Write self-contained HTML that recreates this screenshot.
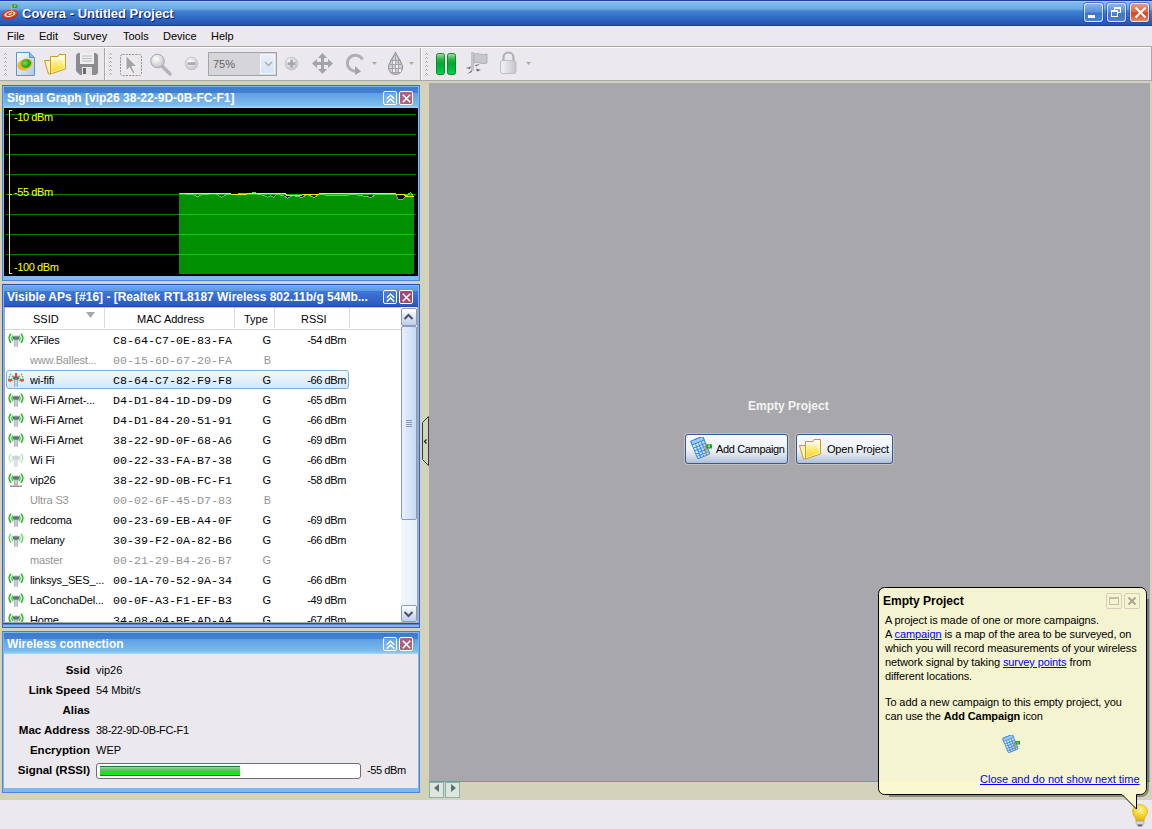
<!DOCTYPE html>
<html><head><meta charset="utf-8">
<style>
*{box-sizing:border-box}
html,body{margin:0;padding:0}
body{width:1152px;height:829px;overflow:hidden;position:relative;background:#D3D2BA;font-family:"Liberation Sans",sans-serif;font-size:11px;color:#000}
.a{position:absolute}
.t{position:absolute;white-space:nowrap;line-height:13px}
/* title bar */
#title{left:0;top:0;width:1152px;height:26px;background:linear-gradient(#1F3FA5 0,#1F3FA5 1px,#9ACBF3 1px,#9ACBF3 2px,#80BDEE 2px,#6CAAE6 8.5px,#5C98DE 10px,#3E82D2 11px,#2E62BE 20px,#2A52B2 25px,#1C3A9C 25px)}
#title .tt{left:22px;top:6px;font-weight:bold;font-size:13px;color:#fff;text-shadow:1px 1px 0 #0A1E70;line-height:16px}
.wb{position:absolute;top:3px;width:19px;height:19px;border:1px solid rgba(255,255,255,.75);border-radius:3px;box-shadow:0 0 0 1px rgba(30,60,160,.55);background:linear-gradient(#88B4EC,#5C90DC 45%,#3E74CC 55%,#4C80D2)}
.wbc{background:linear-gradient(#E49A80,#DA6A44 45%,#D0461A 55%,#E48A68)}
/* menu */
#menu{left:0;top:26px;width:1152px;height:20px;background:#EBE9ED}
#menu .t{top:4px}
/* toolbar */
#tool{left:0;top:46px;width:1152px;height:35px;background:#EBE9ED;border-top:1px solid #A8A8A8;border-bottom:1px solid #A8A8A8;border-right:1px solid #A8A8A8}
#tool:before{content:"";position:absolute;left:0;top:0;right:0;height:1px;background:#fff}
.sep{position:absolute;top:1px;width:2px;height:32px;border-left:1px solid #A8A8A8;border-right:1px solid #fff}
.grip{position:absolute;top:7px;width:3px;height:22px;background:radial-gradient(circle at 1.5px 1.5px,#9A9A9A 0.8px,transparent 1.2px);background-size:3px 4px}
/* panels */
.hdrI{background:linear-gradient(#3E7ACC,#4282D2 6px,#5E9EE6 6px,#7CBCEA 18px,#92CEF6 20px,#9AD4F8 20px)}
.hdrA{background:linear-gradient(#6AA8EC,#5C98E4 5px,#3C78D8 5px,#2C58C0 20px,#2448B0 20px)}
.ht{position:absolute;left:5px;top:5px;font-weight:bold;font-size:12px;color:#fff;white-space:nowrap;line-height:14px}
.pb{position:absolute;top:5px;width:14px;height:14px;border:1px solid #fff;border-radius:2px}
.pb1{left:381px}
.pb2{left:397px}
.pbx{background:#B0607E}
.pbxA{background:#A04A72}
/* list */
.row{position:absolute;left:0;width:395px;height:20px}
.row .t{top:4px}
.mac{font-family:"Liberation Mono",monospace;font-size:11.67px;letter-spacing:0px;top:5px !important}
.dis{color:#939393}

.lv{position:absolute;left:5px;top:330px;width:396px;height:292px;overflow:hidden}
.selbox{left:1px;top:0;width:343px;height:19px;border:1px solid #7DB2DA;border-radius:3px;background:linear-gradient(#F2F8FD,#D4E8F8)}
.hd{position:absolute;top:0;height:22px}
.colsep{position:absolute;top:2px;width:1px;height:20px;background:#DCDCDC}
.lbl{position:absolute;right:0;font-weight:bold;font-size:11.5px;white-space:nowrap;line-height:13px}
.wc .t{left:96px}
.xpbtn{position:absolute;top:434px;height:30px;border:1px solid #2F5A94;border-radius:3px;box-shadow:0 0 0 1px rgba(235,225,215,.45);background:linear-gradient(#FFFFFF 0,#F4F8FA 10%,#EDF2F5 52%,#D4DDE9 76%,#AEBED8 100%)}
.balloon{position:absolute;left:878px;top:587px;width:270px;height:208px;border:1px solid #1A1A1A;border-radius:7px;background:rgba(255,255,226,0.9)}
.lnk{color:#0000FF;text-decoration:underline}
.sb{position:absolute;background:linear-gradient(90deg,#E8F0FC,#C8DAF2);border:1px solid #8C9CB8;border-radius:2px}
</style></head><body>

<svg width="0" height="0" style="position:absolute">
<defs>
  <linearGradient id="gmast" x1="0" x2="1"><stop offset="0" stop-color="#8C90A4"/><stop offset=".5" stop-color="#E4E6EE"/><stop offset="1" stop-color="#8A8EA2"/></linearGradient>
  <linearGradient id="ghead" x1="0" y1="0" x2="0" y2="1"><stop offset="0" stop-color="#B8BCC8"/><stop offset=".5" stop-color="#5C6274"/><stop offset="1" stop-color="#8C90A0"/></linearGradient>
  <g id="antbase">
    <rect x="6.2" y="6" width="3.6" height="8" rx="1" fill="url(#gmast)"/>
    <rect x="5" y="2.5" width="6" height="4.5" rx="1.5" fill="url(#ghead)"/>
  </g>
  <g id="antn">
    <path d="M3 .8Q-.6 5.2 3 9.8M13 .8Q16.6 5.2 13 9.8" fill="none" stroke="#2EBB2E" stroke-width="1.6"/>
    <path d="M5 2.6Q2.8 5.3 5 8.2M11 2.6Q13.2 5.3 11 8.2" fill="none" stroke="#3ACC3A" stroke-width="1.4"/>
    <use href="#antbase"/>
  </g>
  <g id="antm">
    <path d="M3 .8Q-.6 5.2 3 9.8M13 .8Q16.6 5.2 13 9.8" fill="none" stroke="#6CD46C" stroke-width="1.5"/>
    <path d="M5 2.6Q2.8 5.3 5 8.2M11 2.6Q13.2 5.3 11 8.2" fill="none" stroke="#78DA78" stroke-width="1.3"/>
    <use href="#antbase"/>
  </g>
  <g id="antp">
    <path d="M3 .8Q-.6 5.2 3 9.8M13 .8Q16.6 5.2 13 9.8" fill="none" stroke="#BDE8BD" stroke-width="1.5"/>
    <path d="M5 2.6Q2.8 5.3 5 8.2M11 2.6Q13.2 5.3 11 8.2" fill="none" stroke="#C4ECC4" stroke-width="1.3"/>
    <rect x="6.2" y="6" width="3.6" height="8" rx="1" fill="#DDDEE4"/>
    <rect x="5" y="2.5" width="6" height="4.5" rx="1.5" fill="#D0D2DA"/>
  </g>
  <g id="antv">
    <use href="#antn"/>
    <path d="M5.5 12.5L8 10L10.5 12.5Z" fill="#F4B040"/>
    <rect x="2" y="12.5" width="12" height="1.5" fill="#9098B0"/>
  </g>
  <g id="ants">
    <path d="M3 .8Q-.6 5.2 3 9.8M13 .8Q16.6 5.2 13 9.8" fill="none" stroke="#3CC83C" stroke-width="1.3" stroke-dasharray="1.5 1"/>
    <path d="M5 2.6Q2.8 5.3 5 8.2M11 2.6Q13.2 5.3 11 8.2" fill="none" stroke="#40CC40" stroke-width="1.2" stroke-dasharray="1.5 1"/>
    <use href="#antbase"/>
    <rect x="7" y="0" width="2.2" height="4" fill="#F04848"/>
    <rect x="0" y="6" width="4" height="2.2" fill="#F04848"/>
    <rect x="12" y="6" width="4" height="2.2" fill="#F04848"/>
  </g>
  <linearGradient id="gcal" x1="0" y1="0" x2="1" y2="1"><stop offset="0" stop-color="#F4FAFF"/><stop offset="1" stop-color="#A8D2F8"/></linearGradient>
  <g id="camp">
    <g transform="rotate(-22 10.25 10.6)">
      <rect x="3.75" y="1.1" width="13" height="19" rx="1" fill="url(#gcal)" stroke="#3D86DC" stroke-width="1"/>
      <rect x="3.75" y="1.1" width="13" height="4" rx="1" fill="#9ACCF8" stroke="#3D86DC" stroke-width="1"/>
      <path d="M4 8.5H16.5M4 11.5H16.5M4 14.5H16.5M4 17.5H16.5M7 6V20M10.2 6V20M13.4 6V20" stroke="#3D86DC" stroke-width="1"/>
    </g>
    <rect x="15.2" y="7.3" width="1.3" height="10" fill="#C8902A"/>
    <path d="M16.5 7.3H22V11.5H16.5Z" fill="#1FA01F"/>
    <rect x="18" y="8.3" width="2" height="2" fill="#80E880"/>
  </g>
  <g id="camp2">
    <g transform="scale(.82)"><use href="#camp"/></g>
  </g>
  <linearGradient id="gfold" x1="0" y1="0" x2="0" y2="1"><stop offset="0" stop-color="#FFFDE8"/><stop offset="1" stop-color="#FFF0A0"/></linearGradient>
  <linearGradient id="gfold2" x1="0" y1="0" x2="0" y2="1"><stop offset="0" stop-color="#FFF4B0"/><stop offset="1" stop-color="#FFD81C"/></linearGradient>
  <g id="folder">
    <path d="M0.5 7.5H6.5V21L4.5 21Z" fill="#FFF6B8" stroke="#CF9A22" stroke-width="1" stroke-linejoin="round"/>
    <path d="M6.5 3.5H14L15 1.5H21.5V16L6.5 21Z" fill="url(#gfold)" stroke="#CF9A22" stroke-width="1" stroke-linejoin="round"/>
    <path d="M7.5 6.5H17L20.5 15L7.5 19Z" fill="url(#gfold2)"/>
  </g>
</defs>
</svg>

<!-- TITLE BAR -->
<div id="title" class="a">
  <svg class="a" style="left:1px;top:2px" width="19" height="19">
    <g transform="rotate(-12 9 12.4)">
    <ellipse cx="9" cy="12.6" rx="8.2" ry="4.6" fill="#C82810"/>
    <ellipse cx="9" cy="12.2" rx="7.6" ry="4" fill="#E84020"/>
    <ellipse cx="9" cy="12" rx="5.6" ry="2.8" fill="#FCE8E0"/>
    <ellipse cx="9" cy="12" rx="3.8" ry="1.8" fill="#E83A1A"/>
    <ellipse cx="9" cy="12" rx="1.6" ry=".8" fill="#FFF0E8"/>
    </g>
    <rect x="10" y="2" width="1.3" height="10" fill="#D8B040"/>
    <path d="M11.3 2 L16.5 2.8 L16.5 6.2 L11.3 5.8Z" fill="#2CAA2C"/>
    <rect x="13" y="3" width="1.5" height="1.5" fill="#90F090"/>
  </svg>
  <div class="t tt">Covera - Untitled Project</div>
  <div class="wb" style="left:1084px"><div class="a" style="left:3px;top:11px;width:7px;height:3px;background:#fff"></div></div>
  <div class="wb" style="left:1107px">
    <div class="a" style="left:6px;top:3px;width:7px;height:6px;border:1px solid #fff;border-top-width:2px"></div>
    <div class="a" style="left:3px;top:6px;width:7px;height:7px;border:1px solid #fff;border-top-width:2px;background:#4E84D4"></div>
  </div>
  <div class="wb wbc" style="left:1130px">
    <svg class="a" style="left:3px;top:2px" width="13" height="13"><path d="M1.5 1.5L11.5 11.5M11.5 1.5L1.5 11.5" stroke="#fff" stroke-width="2"/></svg>
  </div>
</div>

<!-- MENU -->
<div id="menu" class="a">
  <div class="t" style="left:7px">File</div>
  <div class="t" style="left:39px">Edit</div>
  <div class="t" style="left:73px">Survey</div>
  <div class="t" style="left:123px">Tools</div>
  <div class="t" style="left:163px">Device</div>
  <div class="t" style="left:211px">Help</div>
</div>

<!-- TOOLBAR -->
<div id="tool" class="a">
  <div class="sep" style="left:104px"></div>
  <div class="sep" style="left:420px"></div>
</div>


<!-- toolbar icons (global coords) -->
<svg class="a" style="left:0;top:47px" width="540" height="33">
  <defs>
    <linearGradient id="gdoc" x1="0" y1="0" x2="1" y2="1"><stop offset="0" stop-color="#FFFFFF"/><stop offset="1" stop-color="#A8C8E4"/></linearGradient>
    <radialGradient id="gblob" cx=".4" cy=".4" r=".6"><stop offset="0" stop-color="#70E050"/><stop offset="1" stop-color="#129A12"/></radialGradient>
    <linearGradient id="gpause" x1="0" y1="0" x2="0" y2="1"><stop offset="0" stop-color="#A8DCB0"/><stop offset=".3" stop-color="#22B040"/><stop offset=".5" stop-color="#00A838"/><stop offset="1" stop-color="#00D050"/></linearGradient>
    <linearGradient id="glock" x1="0" y1="0" x2="1" y2="0"><stop offset="0" stop-color="#F4F4F8"/><stop offset=".6" stop-color="#DADADE"/><stop offset="1" stop-color="#C4C4C8"/></linearGradient>
    <radialGradient id="gmag" cx=".4" cy=".35" r=".6"><stop offset="0" stop-color="#FFFFFF"/><stop offset="1" stop-color="#C8C8CC"/></radialGradient>
    <g id="grip"><path d="M0.5 2.5L1.5 1.5L2.5 2.5" fill="none" stroke="#808080" stroke-width="1"/><path d="M0.5 3.5L1.5 2.5L2.5 3.5" fill="none" stroke="#FFFFFF" stroke-width="1" opacity=".9"/></g>
  </defs>
  <!-- grippers -->
  <g transform="translate(4 5)"><use href="#grip"/><use href="#grip" y="4"/><use href="#grip" y="8"/><use href="#grip" y="12"/><use href="#grip" y="16"/><use href="#grip" y="20"/></g>
  <g transform="translate(109 5)"><use href="#grip"/><use href="#grip" y="4"/><use href="#grip" y="8"/><use href="#grip" y="12"/><use href="#grip" y="16"/><use href="#grip" y="20"/></g>
  <g transform="translate(425 5)"><use href="#grip"/><use href="#grip" y="4"/><use href="#grip" y="8"/><use href="#grip" y="12"/><use href="#grip" y="16"/><use href="#grip" y="20"/></g>
  <!-- new doc 16..34 x 52..75 -->
  <g transform="translate(0 -47)">
    <path d="M16.5 52.5H29.5L34.5 57.5V75.5H16.5Z" fill="url(#gdoc)" stroke="#5C94D4" stroke-width="1"/>
    <path d="M29.5 52.5V57.5H34.5" fill="#8CB8E8" stroke="#5C94D4" stroke-width="1"/>
    <ellipse cx="25" cy="64.5" rx="7.8" ry="5.6" transform="rotate(-20 25 64.5)" fill="#F4B420"/>
    <ellipse cx="26" cy="63.5" rx="5" ry="4.2" transform="rotate(-20 26 63.5)" fill="url(#gblob)"/>
  </g>
  <!-- folder 44..66 x 54..74 -->
  <g transform="translate(44 6)"><use href="#folder"/></g>
  <!-- save 76..98 x 53..75 -->
  <g transform="translate(0 -47)">
    <path d="M78 53H96L98 55V73L96 75H80L76 71V55Z" fill="#8C8C8E"/>
    <rect x="80" y="53" width="14" height="11" fill="#F0F0F2"/>
    <path d="M82 56H92M82 58.5H92M82 61H92" stroke="#B8B8BC" stroke-width="1"/>
    <rect x="82" y="67" width="10" height="8" fill="#E4E4E6"/>
    <rect x="83" y="68" width="3" height="6" fill="#6C6C70"/>
  </g>
  <!-- select 120..142 x 54..75 -->
  <g transform="translate(0 -47)">
    <rect x="120.5" y="54.5" width="21" height="21" rx="2" fill="none" stroke="#8E8E8E" stroke-width="1" stroke-dasharray="2 1.2"/>
    <path d="M126 55.5V71L129.5 67.5L133 74L135 73L132 66.5H137Z" fill="#A4A4A6" stroke="#FFFFFF" stroke-width=".8"/>
  </g>
  <!-- magnifier -->
  <g transform="translate(0 -47)">
    <path d="M162 66L170 74" stroke="#B4B4B8" stroke-width="3.6" stroke-linecap="round"/>
    <circle cx="157.5" cy="61" r="6.8" fill="url(#gmag)" stroke="#A8A8AC" stroke-width="1"/>
  </g>
  <!-- minus -->
  <g transform="translate(0 -47)">
    <circle cx="191.5" cy="63.5" r="6.3" fill="url(#gmag)" stroke="#C4C4C8" stroke-width="1"/>
    <rect x="187.5" y="62.3" width="8" height="2.6" fill="#A8A8AC"/>
  </g>
  <!-- plus -->
  <g transform="translate(0 -47)">
    <circle cx="291.5" cy="63.5" r="6.3" fill="url(#gmag)" stroke="#C4C4C8" stroke-width="1"/>
    <path d="M287.5 63.6H295.5M291.5 59.6V67.6" stroke="#A8A8AC" stroke-width="2.6"/>
  </g>
  <!-- move 312..333 x 53..74 -->
  <g transform="translate(0 -47)" fill="#A4A4A8">
    <rect x="321" y="57" width="3" height="13"/>
    <rect x="316" y="62" width="13" height="3"/>
    <path d="M322.5 53L327 58H318Z M322.5 74L327 69H318Z M312 63.5L317 59V68Z M333 63.5L328 59V68Z"/>
  </g>
  <!-- rotate -->
  <g transform="translate(0 -47)">
    <path d="M362.5 59.5A8 8 0 1 0 357 71" fill="none" stroke="#B0B0B4" stroke-width="3"/>
    <path d="M355 66L361 71.5L355 75Z" fill="#A4A4A8"/>
    <path d="M372 62H377L374.5 65Z" fill="#AEAE98"/>
  </g>
  <!-- drop 388..403 x 52..75 -->
  <g transform="translate(0 -47)">
    <path d="M395.5 52.5C393 58 388.5 63 388.5 67.5A7 7 0 0 0 402.5 67.5C402.5 63 398 58 395.5 52.5Z" fill="#D2D2D6" stroke="#96969A" stroke-width="1.1"/>
    <path d="M390 60.5H401M389 64.5H402M389 68.5H402M390 72.5H401M392.5 57V74M395.5 55V75M398.5 57V74" stroke="#A4A4A8" stroke-width="1"/>
    <path d="M393 61h2v3h-2zM396 65h2v3h-2zM393 69h2v3h-2zM399 69h2v3h-2z" fill="#F4F4F6"/>
    <path d="M409 62H414L411.5 65Z" fill="#AEAE98"/>
  </g>
  <!-- pause -->
  <g transform="translate(0 -47)">
    <rect x="436.5" y="53.5" width="8" height="21" rx="2" fill="url(#gpause)" stroke="#118A22" stroke-width="1"/>
    <rect x="447.5" y="53.5" width="8" height="21" rx="2" fill="url(#gpause)" stroke="#118A22" stroke-width="1"/>
  </g>
  <!-- flag 466..487 x 52..75 -->
  <g transform="translate(0 -47)">
    <rect x="471" y="52" width="3" height="19" fill="#C4C4C8"/>
    <path d="M474 54C478 52 480 56 487 54V63C481 65 478 61 474 63Z" fill="#C8C8CC" stroke="#A8A8AC" stroke-width=".8"/>
    <path d="M466 68L471 66.5L470 69Z M481 70L476 68.5L477 71.5Z M467 74L471.5 70.5L472 72Z M480 64L476 66.5L475 65Z" fill="#6C6C70"/>
  </g>
  <!-- lock -->
  <g transform="translate(0 -47)">
    <path d="M503.5 62V57.5A5 5 0 0 1 513.5 57.5V62" fill="none" stroke="#B0B0B4" stroke-width="2.2"/>
    <rect x="500.5" y="60.5" width="15.5" height="13" rx="2.5" fill="url(#glock)" stroke="#BEBEC2" stroke-width="1"/>
    <path d="M526 62H531L528.5 65Z" fill="#AEAE98"/>
  </g>
</svg>
<!-- combo -->
<div class="a" style="left:208px;top:52px;width:69px;height:24px;border:1px solid #A4A4A6;background:#D6D5DA">
  <div class="t" style="left:4px;top:5px;color:#646464">75%</div>
  <div class="a" style="left:51px;top:1px;width:15px;height:20px;background:linear-gradient(#E6F0FC,#D4E4F8);border:1px solid #F4F8FF"><svg class="a" style="left:3px;top:6px" width="9" height="6"><path d="M1 1L4.5 4.5L8 1" fill="none" stroke="#B4B4A0" stroke-width="1.6"/></svg></div>
</div>

<!-- RIGHT GRAY AREA -->
<div class="a" style="left:429px;top:83px;width:721px;height:698px;background:#A8A7AC"></div>
<div class="a" style="left:429px;top:781px;width:721px;height:1px;background:#6F9C9C"></div>

<!-- STATUS BAR -->
<div class="a" style="left:0;top:800px;width:1152px;height:29px;background:#EBE9ED"></div>

<!-- PANEL 1 -->
<div class="a" style="left:2px;top:85px;width:418px;height:196px;background:#82BCEE;border:1px solid #4C84DC;border-top-color:#3E62C4;border-right-color:#4A7CD8"></div>
<div class="a hdrI" style="left:4px;top:87px;width:414px;height:21px">
  <div class="ht" style="left:3px;top:4px">Signal Graph [vip26 38-22-9D-0B-FC-F1]</div>
</div>
<div class="a" style="left:4px;top:108px;width:414px;height:168px;background:#000"></div>

<!-- PANEL 2 -->
<div class="a" style="left:2px;top:284px;width:418px;height:344px;background:#84B6EC;border:1px solid #3A62C8;border-top-color:#2A4CB0"></div>
<div class="a hdrA" style="left:4px;top:286px;width:414px;height:21px">
  <div class="ht" style="left:3px;top:4px">Visible APs [#16] - [Realtek RTL8187 Wireless 802.11b/g 54Mb...</div>
</div>
<div class="a" style="left:4px;top:307px;width:414px;height:316px;background:#fff;border:1px solid #A4A4A4;border-top:0;border-bottom-color:#B0AAA4"></div>
<div class="a" style="left:3px;top:623px;width:416px;height:1px;background:#2A4CA8"></div>
<div class="a" style="left:3px;top:624px;width:416px;height:1px;background:#5A88D0"></div>

<!-- PANEL 3 -->
<div class="a" style="left:2px;top:631px;width:418px;height:162px;background:#7EB8EE;border:1px solid #4C84DC;border-top-color:#4A78D8"></div>
<div class="a hdrI" style="left:4px;top:633px;width:414px;height:21px">
  <div class="ht" style="left:3px;top:4px">Wireless connection</div>
</div>
<div class="a" style="left:4px;top:654px;width:414px;height:134px;background:#EBE9ED"></div>

<svg class="a" style="left:4px;top:108px" width="414" height="168" shape-rendering="crispEdges">
  <rect x="2" y="6" width="410" height="1" fill="#008000"/><rect x="2" y="26" width="410" height="1" fill="#008000"/><rect x="2" y="46" width="410" height="1" fill="#008000"/><rect x="2" y="66" width="410" height="1" fill="#008000"/><rect x="2" y="86" width="410" height="1" fill="#008000"/><rect x="2" y="106" width="410" height="1" fill="#008000"/><rect x="2" y="126" width="410" height="1" fill="#008000"/><rect x="2" y="146" width="410" height="1" fill="#008000"/>
  <polygon points="175,166 175.5,85.5 188.5,86.5 193.5,88.5 198.5,86.5 211.5,85.5 217.5,89.5 222.5,86.5 246.5,85.5 250.5,84.5 254.5,86.5 260.5,87.5 263.5,89.5 266.5,87.5 269.5,89.5 272.5,86.5 279.5,87.5 283.5,90.5 288.5,87.5 298.5,89.5 302.5,86.5 310.5,89.5 314.5,86.5 326.5,87.5 341.5,87.5 348.5,86.5 356.5,87.5 367.5,89.5 371.5,86.5 391.5,86.5 394.5,91.5 398.5,91.5 401.5,88.5 406.5,84.5 409.5,88.5 410,88 410,166" fill="#009000"/>
  <rect x="175" y="86" width="234" height="1" fill="#18C018"/><rect x="175" y="106" width="234" height="1" fill="#18C018"/><rect x="175" y="126" width="234" height="1" fill="#18C018"/><rect x="175" y="146" width="234" height="1" fill="#18C018"/>
  <polyline points="175.5,85.5 188.5,86.5 193.5,88.5 198.5,86.5 211.5,85.5 217.5,89.5 222.5,86.5 246.5,85.5 250.5,84.5 254.5,86.5 260.5,87.5 263.5,89.5 266.5,87.5 269.5,89.5 272.5,86.5 279.5,87.5 283.5,90.5 288.5,87.5 298.5,89.5 302.5,86.5 310.5,89.5 314.5,86.5 326.5,87.5 341.5,87.5 348.5,86.5 356.5,87.5 367.5,89.5 371.5,86.5 391.5,86.5 394.5,91.5 398.5,91.5 401.5,88.5 406.5,84.5 409.5,88.5" fill="none" stroke="#48E048" stroke-width="1"/>
  <polyline points="175.5,85.5 226.5,85.5 227.5,86.5 242.5,86.5 243.5,85.5 281.5,85.5 282.5,87.5 314.5,86.5 315.5,85.5 391.5,85.5 392.5,86.5 400.5,86.5 401.5,88.5 409.5,88.5" fill="none" stroke="#F0F000" stroke-width="1"/>
  <path d="M7.5 2.5H5.5V165.5H7.5M5.5 86.5H7.5" fill="none" stroke="#FFFF00" stroke-width="1"/>
</svg>
<div class="t" style="left:14px;top:111px;color:#FFFF00;letter-spacing:-0.4px">-10 dBm</div>
<div class="t" style="left:14px;top:186px;color:#FFFF00;letter-spacing:-0.4px">-55 dBm</div>
<div class="t" style="left:14px;top:261px;color:#FFFF00;letter-spacing:-0.4px">-100 dBm</div>
<div class="pb" style="left:383px;top:91px;background:rgba(255,255,255,.08)"><svg class="a" style="left:2px;top:2px" width="9" height="9"><path d="M.8 4.8L4.5 1.2L8.2 4.8M.8 8.6L4.5 5L8.2 8.6" fill="none" stroke="#fff" stroke-width="1.5"/></svg></div>
<div class="pb pbx" style="left:399px;top:91px"><svg class="a" style="left:2px;top:2px" width="9" height="9"><path d="M.8 .8L8.2 8.2M8.2 .8L.8 8.2" stroke="#fff" stroke-width="1.6"/></svg></div>

<!-- panel 2 buttons -->
<div class="pb" style="left:383px;top:290px;background:rgba(255,255,255,.08)"><svg class="a" style="left:2px;top:2px" width="9" height="9"><path d="M.8 4.8L4.5 1.2L8.2 4.8M.8 8.6L4.5 5L8.2 8.6" fill="none" stroke="#fff" stroke-width="1.5"/></svg></div>
<div class="pb pbxA" style="left:399px;top:290px"><svg class="a" style="left:2px;top:2px" width="9" height="9"><path d="M.8 .8L8.2 8.2M8.2 .8L.8 8.2" stroke="#fff" stroke-width="1.6"/></svg></div>

<!-- list header -->
<div class="a" style="left:5px;top:307px;width:396px;height:23px;background:#fff;border-bottom:1px solid #D8D8D8"></div>
<div class="a" style="left:5px;top:307px;width:412px;height:1px;background:#C9C5C0"></div>
<div class="t" style="left:33px;top:313px">SSID</div>
<svg class="a" style="left:86px;top:312px" width="10" height="7"><path d="M0 0H9L4.5 6Z" fill="#A8A8A8"/></svg>
<div class="colsep" style="left:104px;top:308px"></div>
<div class="t" style="left:137px;top:313px">MAC Address</div>
<div class="colsep" style="left:234px;top:308px"></div>
<div class="t" style="left:244px;top:313px">Type</div>
<div class="colsep" style="left:274px;top:308px"></div>
<div class="t" style="left:301px;top:313px">RSSI</div>
<div class="colsep" style="left:349px;top:308px"></div>

<div class="lv">
<div class="row" style="top:0px"><svg class="a" style="left:3px;top:3px" width="16" height="14"><use href="#antn"/></svg><div class="t" style="left:25px;letter-spacing:-0.15px">XFiles</div><div class="t mac" style="left:108px">C8-64-C7-0E-83-FA</div><div class="t" style="left:239px;width:27px;text-align:right">G</div><div class="t" style="left:281px;width:60px;text-align:right;letter-spacing:-0.4px">-54 dBm</div></div>
<div class="row dis" style="top:20px"><div class="t" style="left:25px;letter-spacing:-0.15px">www.Ballest...</div><div class="t mac" style="left:108px">00-15-6D-67-20-FA</div><div class="t" style="left:239px;width:27px;text-align:right">B</div><div class="t" style="left:281px;width:60px;text-align:right;letter-spacing:-0.4px"></div></div>
<div class="row" style="top:40px"><div class="a selbox"></div><svg class="a" style="left:3px;top:3px" width="16" height="14"><use href="#ants"/></svg><div class="t" style="left:25px;letter-spacing:-0.15px">wi-fifi</div><div class="t mac" style="left:108px">C8-64-C7-82-F9-F8</div><div class="t" style="left:239px;width:27px;text-align:right">G</div><div class="t" style="left:281px;width:60px;text-align:right;letter-spacing:-0.4px">-66 dBm</div></div>
<div class="row" style="top:60px"><svg class="a" style="left:3px;top:3px" width="16" height="14"><use href="#antn"/></svg><div class="t" style="left:25px;letter-spacing:-0.15px">Wi-Fi Arnet-...</div><div class="t mac" style="left:108px">D4-D1-84-1D-D9-D9</div><div class="t" style="left:239px;width:27px;text-align:right">G</div><div class="t" style="left:281px;width:60px;text-align:right;letter-spacing:-0.4px">-65 dBm</div></div>
<div class="row" style="top:80px"><svg class="a" style="left:3px;top:3px" width="16" height="14"><use href="#antn"/></svg><div class="t" style="left:25px;letter-spacing:-0.15px">Wi-Fi Arnet</div><div class="t mac" style="left:108px">D4-D1-84-20-51-91</div><div class="t" style="left:239px;width:27px;text-align:right">G</div><div class="t" style="left:281px;width:60px;text-align:right;letter-spacing:-0.4px">-66 dBm</div></div>
<div class="row" style="top:100px"><svg class="a" style="left:3px;top:3px" width="16" height="14"><use href="#antn"/></svg><div class="t" style="left:25px;letter-spacing:-0.15px">Wi-Fi Arnet</div><div class="t mac" style="left:108px">38-22-9D-0F-68-A6</div><div class="t" style="left:239px;width:27px;text-align:right">G</div><div class="t" style="left:281px;width:60px;text-align:right;letter-spacing:-0.4px">-69 dBm</div></div>
<div class="row" style="top:120px"><svg class="a" style="left:3px;top:3px" width="16" height="14"><use href="#antp"/></svg><div class="t" style="left:25px;letter-spacing:-0.15px">Wi Fi</div><div class="t mac" style="left:108px">00-22-33-FA-B7-38</div><div class="t" style="left:239px;width:27px;text-align:right">G</div><div class="t" style="left:281px;width:60px;text-align:right;letter-spacing:-0.4px">-66 dBm</div></div>
<div class="row" style="top:140px"><svg class="a" style="left:3px;top:3px" width="16" height="14"><use href="#antv"/></svg><div class="t" style="left:25px;letter-spacing:-0.15px">vip26</div><div class="t mac" style="left:108px">38-22-9D-0B-FC-F1</div><div class="t" style="left:239px;width:27px;text-align:right">G</div><div class="t" style="left:281px;width:60px;text-align:right;letter-spacing:-0.4px">-58 dBm</div></div>
<div class="row dis" style="top:160px"><div class="t" style="left:25px;letter-spacing:-0.15px">Ultra S3</div><div class="t mac" style="left:108px">00-02-6F-45-D7-83</div><div class="t" style="left:239px;width:27px;text-align:right">B</div><div class="t" style="left:281px;width:60px;text-align:right;letter-spacing:-0.4px"></div></div>
<div class="row" style="top:180px"><svg class="a" style="left:3px;top:3px" width="16" height="14"><use href="#antn"/></svg><div class="t" style="left:25px;letter-spacing:-0.15px">redcoma</div><div class="t mac" style="left:108px">00-23-69-EB-A4-0F</div><div class="t" style="left:239px;width:27px;text-align:right">G</div><div class="t" style="left:281px;width:60px;text-align:right;letter-spacing:-0.4px">-69 dBm</div></div>
<div class="row" style="top:200px"><svg class="a" style="left:3px;top:3px" width="16" height="14"><use href="#antm"/></svg><div class="t" style="left:25px;letter-spacing:-0.15px">melany</div><div class="t mac" style="left:108px">30-39-F2-0A-82-B6</div><div class="t" style="left:239px;width:27px;text-align:right">G</div><div class="t" style="left:281px;width:60px;text-align:right;letter-spacing:-0.4px">-66 dBm</div></div>
<div class="row dis" style="top:220px"><div class="t" style="left:25px;letter-spacing:-0.15px">master</div><div class="t mac" style="left:108px">00-21-29-B4-26-B7</div><div class="t" style="left:239px;width:27px;text-align:right">G</div><div class="t" style="left:281px;width:60px;text-align:right;letter-spacing:-0.4px"></div></div>
<div class="row" style="top:240px"><svg class="a" style="left:3px;top:3px" width="16" height="14"><use href="#antn"/></svg><div class="t" style="left:25px;letter-spacing:-0.15px">linksys_SES_...</div><div class="t mac" style="left:108px">00-1A-70-52-9A-34</div><div class="t" style="left:239px;width:27px;text-align:right">G</div><div class="t" style="left:281px;width:60px;text-align:right;letter-spacing:-0.4px">-66 dBm</div></div>
<div class="row" style="top:260px"><svg class="a" style="left:3px;top:3px" width="16" height="14"><use href="#antn"/></svg><div class="t" style="left:25px;letter-spacing:-0.15px">LaConchaDel...</div><div class="t mac" style="left:108px">00-0F-A3-F1-EF-B3</div><div class="t" style="left:239px;width:27px;text-align:right">G</div><div class="t" style="left:281px;width:60px;text-align:right;letter-spacing:-0.4px">-49 dBm</div></div>
<div class="row" style="top:280px"><svg class="a" style="left:3px;top:3px" width="16" height="14"><use href="#antn"/></svg><div class="t" style="left:25px;letter-spacing:-0.15px">Home</div><div class="t mac" style="left:108px">34-08-04-BF-AD-A4</div><div class="t" style="left:239px;width:27px;text-align:right">G</div><div class="t" style="left:281px;width:60px;text-align:right;letter-spacing:-0.4px">-67 dBm</div></div>
</div>

<!-- v scrollbar -->
<div class="a" style="left:401px;top:307px;width:16px;height:315px;background:linear-gradient(90deg,#F4F8FE,#E6EEFA)"></div>
<div class="sb" style="left:401px;top:308px;width:16px;height:18px;background:linear-gradient(#FFFFFF,#FFFFFF 15%,#E2ECFA 35%,#BCCFEA)"><svg class="a" style="left:1px;top:4px" width="11" height="8"><path d="M1.5 6L5.5 2L9.5 6" fill="none" stroke="#4D5260" stroke-width="2"/></svg></div>
<div class="sb" style="left:401px;top:326px;width:16px;height:194px"><svg class="a" style="left:4px;top:93px" width="6" height="8"><path d="M0 .5H6M0 2.5H6M0 4.5H6M0 6.5H6" stroke="#8A98B4" stroke-width="1"/></svg></div>
<div class="sb" style="left:401px;top:605px;width:16px;height:17px;background:linear-gradient(#FFFFFF,#E2ECFA 35%,#BCCFEA)"><svg class="a" style="left:1px;top:4px" width="11" height="8"><path d="M1.5 2L5.5 6L9.5 2" fill="none" stroke="#4D5260" stroke-width="2"/></svg></div>

<!-- panel 3 content -->
<div class="a" style="left:0;top:664px;width:90px;height:120px">
  <div class="lbl" style="top:0">Ssid</div>
  <div class="lbl" style="top:20px">Link Speed</div>
  <div class="lbl" style="top:40px">Alias</div>
  <div class="lbl" style="top:60px">Mac Address</div>
  <div class="lbl" style="top:80px">Encryption</div>
  <div class="lbl" style="top:100px">Signal (RSSI)</div>
</div>
<div class="t" style="left:96px;top:664px">vip26</div>
<div class="t" style="left:96px;top:684px">54 Mbit/s</div>
<div class="t" style="left:96px;top:724px;letter-spacing:-0.3px">38-22-9D-0B-FC-F1</div>
<div class="t" style="left:96px;top:744px">WEP</div>
<div class="a" style="left:96px;top:763px;width:265px;height:16px;border:1px solid #707070;border-radius:3px;background:#fff"></div>
<div class="a" style="left:100px;top:766px;width:140px;height:10px;background:linear-gradient(#107840 0,#107840 1px,#A8D8A8 1px,#6CC46C 3px,#62BE62 5px,#1EE01E 5px,#1AE41A 9px,#107840 9px)"></div>
<div class="t" style="left:367px;top:764px;letter-spacing:-0.4px">-55 dBm</div>
<div class="pb" style="left:383px;top:637px;background:rgba(255,255,255,.08)"><svg class="a" style="left:2px;top:2px" width="9" height="9"><path d="M.8 4.8L4.5 1.2L8.2 4.8M.8 8.6L4.5 5L8.2 8.6" fill="none" stroke="#fff" stroke-width="1.5"/></svg></div>
<div class="pb pbx" style="left:399px;top:637px"><svg class="a" style="left:2px;top:2px" width="9" height="9"><path d="M.8 .8L8.2 8.2M8.2 .8L.8 8.2" stroke="#fff" stroke-width="1.6"/></svg></div>

<!-- splitter arrow -->
<svg class="a" style="left:421px;top:415px" width="8" height="52"><path d="M1.5 7.5L7.5 1.5V50.5L1.5 44.5Z" fill="#D3D2BA" stroke="#3A3A3A" stroke-width="1"/><path d="M5.5 24.5L3.5 26.5L5.5 28.5" fill="none" stroke="#222" stroke-width="1.2"/></svg>

<!-- center -->
<div class="t" style="left:748px;top:399px;font-weight:bold;font-size:12px;color:#F4F4F4;line-height:14px">Empty Project</div>
<div class="xpbtn" style="left:685px;width:103px">
  <svg class="a" style="left:4px;top:2px" width="24" height="24"><use href="#camp"/></svg>
  <div class="t" style="left:30px;top:8px;letter-spacing:-0.35px">Add Campaign</div>
</div>
<div class="xpbtn" style="left:796px;width:97px">
  <svg class="a" style="left:2px;top:3px" width="24" height="24"><use href="#folder"/></svg>
  <div class="t" style="left:30px;top:8px;letter-spacing:-0.2px">Open Project</div>
</div>

<!-- h scroll buttons -->
<div class="a" style="left:429px;top:782px;width:15px;height:16px;background:linear-gradient(#E2E6DC,#D8E6DC 45%,#E2E6DC);border:1px solid #8AB0B0"><svg class="a" style="left:3px;top:1px" width="8" height="9"><path d="M6 0V8L1 4Z" fill="#5C7074"/></svg></div>
<div class="a" style="left:445px;top:782px;width:15px;height:16px;background:linear-gradient(#E2E6DC,#D8E6DC 45%,#E2E6DC);border:1px solid #8AB0B0"><svg class="a" style="left:4px;top:1px" width="8" height="9"><path d="M1 0V8L6 4Z" fill="#5C7074"/></svg></div>

<!-- balloon -->
<svg class="a" style="left:1131px;top:803px" width="18" height="24"><defs><radialGradient id="bulb" cx=".55" cy=".35" r=".7"><stop offset="0" stop-color="#FFF6A0"/><stop offset=".55" stop-color="#F6D630"/><stop offset="1" stop-color="#D8A808"/></radialGradient></defs><path d="M9 1.5C4.5 1.5 1.5 4.5 1.5 8.5c0 3 2.2 5 3.2 7.5V18h8.6v-2c1-2.5 3.2-4.5 3.2-7.5C16.5 4.5 13.5 1.5 9 1.5Z" fill="url(#bulb)" stroke="#E0B020" stroke-width=".6"/><path d="M7 11V17M9 10V17M11 11V17" stroke="#E8B810" stroke-width=".8" opacity=".7"/><rect x="5" y="18" width="8" height="3.5" rx="1" fill="#D4D6DC" stroke="#9A9CA4" stroke-width=".6"/><rect x="6.5" y="21.5" width="5" height="2" rx="1" fill="#64646C"/></svg>
<svg class="a" style="left:876px;top:585px" width="276" height="230">
  <defs><linearGradient id="gbal" gradientUnits="userSpaceOnUse" x1="0" y1="0" x2="0" y2="230"><stop offset="0" stop-color="#F5F4D0"/><stop offset=".852" stop-color="#F5F4D0"/><stop offset=".852" stop-color="#FAF8D1"/><stop offset="1" stop-color="#FAF8D1"/></linearGradient></defs>
  <path d="M13 211H265A7 7 0 0 0 272 204V14" fill="none" stroke="rgba(40,40,30,.42)" stroke-width="2"/>
  <path d="M8.5 2.5 H264.5 A6 6 0 0 1 270.5 8.5 V203.5 A6 6 0 0 1 264.5 209.5 H260.5 V224 L246 209.5 H8.5 A6 6 0 0 1 2.5 203.5 V8.5 A6 6 0 0 1 8.5 2.5Z" fill="url(#gbal)" stroke="#000" stroke-width="1"/>
</svg>
<div class="a" style="left:878px;top:587px;width:270px;height:208px">
  <div class="t" style="left:5px;top:7px;font-weight:bold;font-size:12px;line-height:14px">Empty Project</div>
  <div class="a" style="left:228px;top:6px;width:16px;height:16px;border:1px solid #D6CEBA;border-radius:2px"><div class="a" style="left:2px;top:3px;width:10px;height:8px;border:1px solid #C4BCA8;border-top-width:2px"></div></div>
  <div class="a" style="left:246px;top:6px;width:16px;height:16px;border:1px solid #D6CEBA;border-radius:2px"><svg class="a" style="left:2px;top:2px" width="10" height="10"><path d="M1.5 1.5L8.5 8.5M8.5 1.5L1.5 8.5" stroke="#A8A090" stroke-width="1.8"/></svg></div>
  <div class="a" style="left:7px;top:26px;width:262px;line-height:14px;white-space:nowrap;letter-spacing:-0.1px">A project is made of one or more campaigns.<br>A <span class="lnk">campaign</span> is a map of the area to be surveyed, on<br>which you will record measurements of your wireless<br>network signal by taking <span class="lnk">survey points</span> from<br>different locations.</div>
  <div class="a" style="left:7px;top:108px;width:262px;line-height:14px;white-space:nowrap;letter-spacing:-0.1px">To add a new campaign to this empty project, you<br>can use the <b>Add Campaign</b> icon</div>
  <svg class="a" style="left:124px;top:148px" width="20" height="22"><use href="#camp2"/></svg>
  <div class="t lnk" style="left:102px;top:186px">Close and do not show next time</div>
</div>


</body></html>
